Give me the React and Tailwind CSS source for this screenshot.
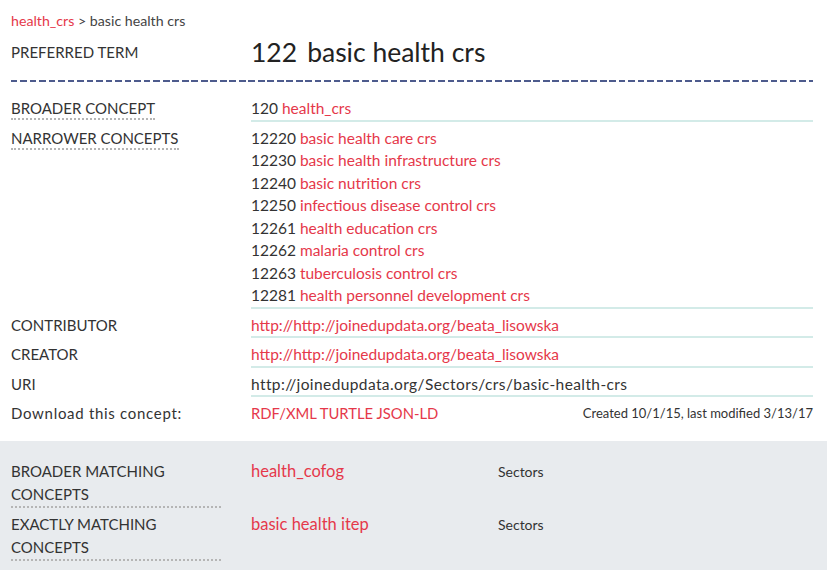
const narrower = [
  ['12220', 'basic health care crs'],
  ['12230', 'basic health infrastructure crs'],
  ['12240', 'basic nutrition crs'],
  ['12250', 'infectious disease control crs'],
  ['12261', 'health education crs'],
  ['12262', 'malaria control crs'],
  ['12263', 'tuberculosis control crs'],
  ['12281', 'health personnel development crs'],
];

const matches = [
  ['BROADER MATCHING CONCEPTS', 'health_cofog', 'Sectors'],
  ['EXACTLY MATCHING CONCEPTS', 'basic health itep', 'Sectors'],
];

function Row({ label, dotted, underline = true, labelClass = '', children }) {
  return (
    <div className="flex mt-[5px]">
      <div className={'w-[240px] shrink-0 text-[15px] leading-[22.5px] text-[#333] ' + labelClass}>
        <span className={dotted ? 'inline-block leading-[20px] border-b-2 border-dotted border-[#b5b5b5]' : ''}>{label}</span>
      </div>
      <div className={'flex-1 text-[15.5px] leading-[22.5px] text-[#333] ' + (underline ? 'border-b-2 border-[#d3ebe8]' : '')}>
        {children}
      </div>
    </div>
  );
}

export default function App() {
  return (
    <div className="min-h-screen bg-white font-['Lato','Open_Sans',sans-serif]">
      <div className="pl-[11px] pr-[14px] pb-[16px]">
        <div className="pt-[11px] h-[31px] text-[14.2px] leading-[20px] text-[#444]">
          <span className="text-[#e5384a]">health_crs</span> &gt; basic health crs
        </div>
        <div className="flex items-center h-[34px] mt-[4px]">
          <div className="w-[240px] text-[15px] text-[#333]">PREFERRED TERM</div>
          <h1 className="text-[26.5px] leading-[34px] text-[#222]">
            <span className="mr-[10px]">122</span>basic health crs
          </h1>
        </div>
        <div className="mt-[11px] h-[2px] bg-[repeating-linear-gradient(to_right,#4d5b8d_0,#4d5b8d_6.5px,transparent_6.5px,transparent_9.5px)]" />
        <div className="mt-[15px]">
          <Row label="BROADER CONCEPT" dotted>
            120 <span className="text-[#e5384a]">health_crs</span>
          </Row>
          <Row label="NARROWER CONCEPTS" dotted>
            {narrower.map(([code, name]) => (
              <div key={code}>
                {code} <span className="text-[#e5384a]">{name}</span>
              </div>
            ))}
          </Row>
          <Row label="CONTRIBUTOR">
            <span className="text-[#e5384a]">http://http://joinedupdata.org/beata_lisowska</span>
          </Row>
          <Row label="CREATOR">
            <span className="text-[#e5384a]">http://http://joinedupdata.org/beata_lisowska</span>
          </Row>
          <Row label="URI">
            <span className="tracking-[0.4px]">http://joinedupdata.org/Sectors/crs/basic-health-crs</span>
          </Row>
          <Row label="Download this concept:" labelClass="tracking-[0.7px]" underline={false}>
            <div className="flex items-center justify-between">
              <span className="text-[14.8px] text-[#e5384a]">RDF/XML TURTLE JSON-LD</span>
              <span className="text-[13px] text-[#333]">Created 10/1/15, last modified 3/13/17</span>
            </div>
          </Row>
        </div>
      </div>
      <div className="bg-[#e8ebee] pl-[11px] pr-[14px] pt-[14.5px] pb-[20px]">
        {matches.map(([label, value, scheme]) => (
          <div key={value} className="flex mt-[5px]">
            <div className="w-[240px] shrink-0">
              <div className="w-[210px] text-[15px] leading-[23px] text-[#333] border-b-2 border-dotted border-[#b5b5b5]">
                {label}
              </div>
            </div>
            <div className="w-[247px] text-[16.5px] leading-[23px] text-[#e5384a]">{value}</div>
            <div className="text-[14px] leading-[23px] text-[#333]">{scheme}</div>
          </div>
        ))}
      </div>
    </div>
  );
}
